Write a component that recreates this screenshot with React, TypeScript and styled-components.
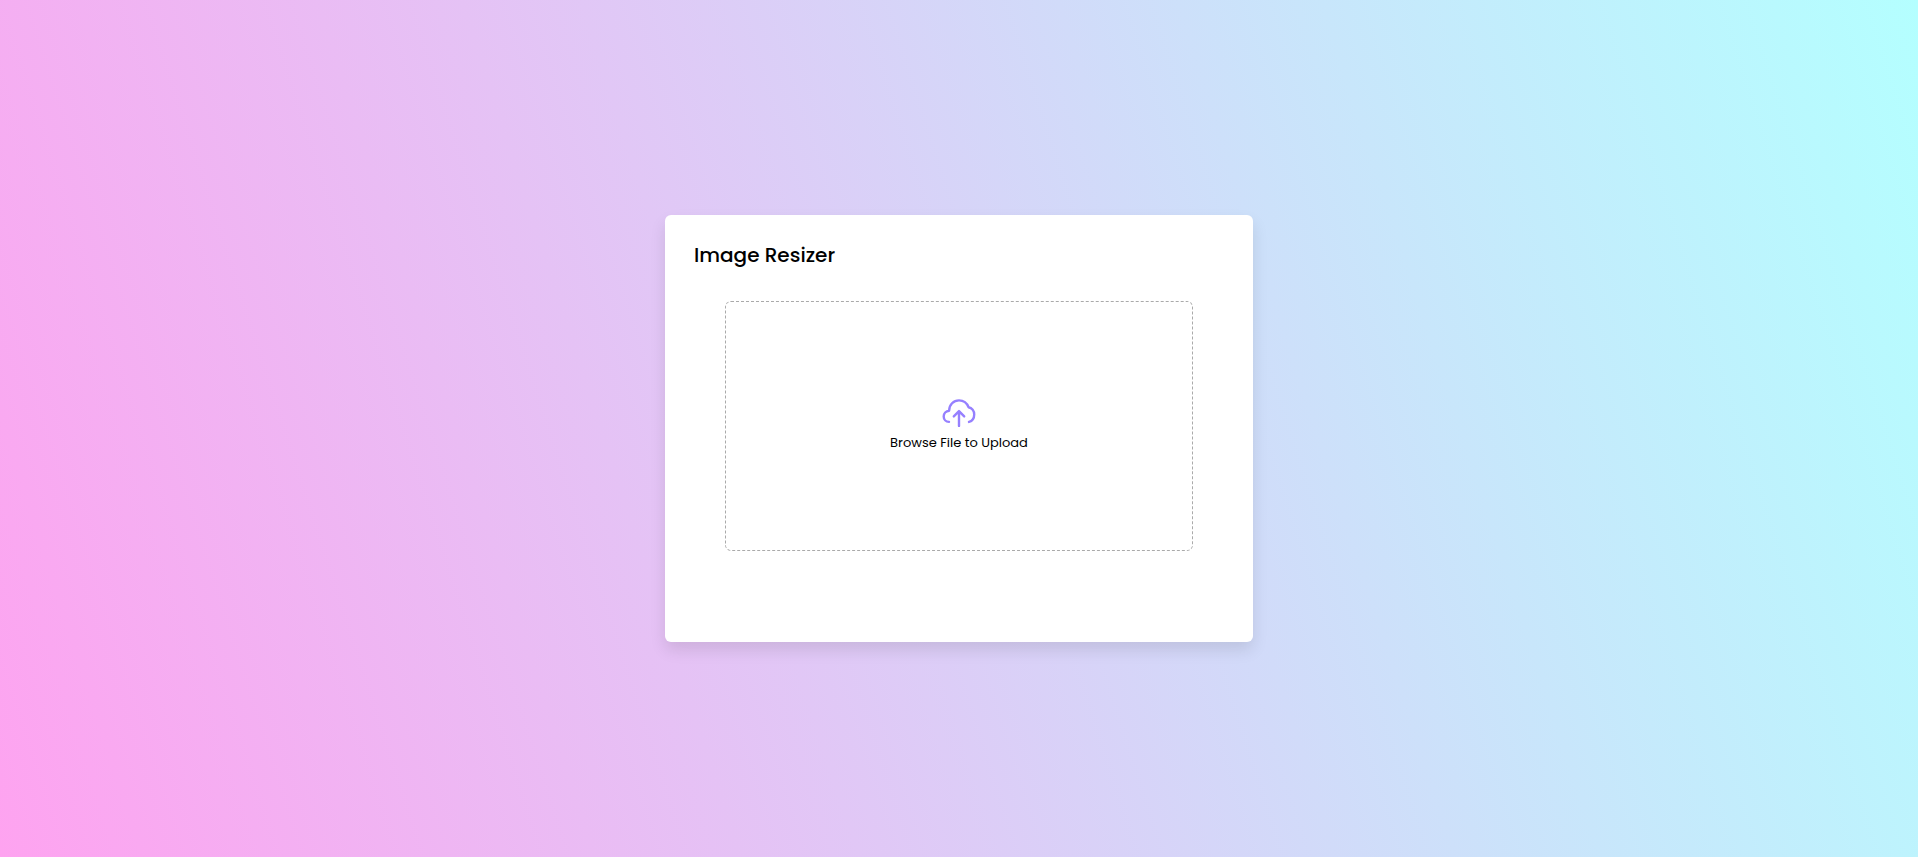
import { useState } from "react";
import styled, { createGlobalStyle } from "styled-components";

const GlobalStyle = createGlobalStyle`
  *, *::before, *::after { box-sizing: border-box; }
  body {
    margin: 0;
    font-family: Poppins, Inter, "Liberation Sans", sans-serif;
    color: #000;
  }
`;

const Page = styled.main`
  min-height: 100vh;
  display: flex;
  align-items: center;
  justify-content: center;
  background: linear-gradient(72deg, #fea3f0, #b4ffff);
`;

const Card = styled.section`
  width: 100%;
  max-width: 588px;
  padding: 25px 29px 91px;
  border-radius: 6px;
  background: #fff;
  box-shadow: 0 8px 16px rgba(0, 0, 0, 0.1);
`;

const Title = styled.h1`
  margin: 0 0 31px;
  font-size: 20px;
  line-height: 30px;
  font-weight: 500;
`;

const DropZone = styled.label`
  display: flex;
  flex-direction: column;
  align-items: center;
  justify-content: center;
  height: 250px;
  margin: 0 31px;
  border: 1px dashed #aaa;
  border-radius: 6px;
  cursor: pointer;

  &:focus-within {
    border-color: #927dfc;
  }
`;

const FileInput = styled.input`
  position: absolute;
  width: 1px;
  height: 1px;
  opacity: 0;
`;

const UploadIcon = styled.svg`
  width: 34px;
  height: 30px;
  fill: none;
  stroke: #9680ff;
  stroke-width: 2.4;
  stroke-linecap: round;
  stroke-linejoin: round;
`;

const Caption = styled.span`
  margin-top: 4px;
  font-size: 13px;
  line-height: 20px;
`;

export default function App() {
  const [fileName, setFileName] = useState("");

  return (
    <>
      <GlobalStyle />
      <Page>
        <Card>
          <Title>Image Resizer</Title>
          <DropZone>
            <FileInput
              type="file"
              accept="image/*"
              onChange={(event) => setFileName(event.target.files?.[0]?.name ?? "")}
            />
            <UploadIcon viewBox="0 0 34 30" aria-hidden="true">
              <path d="M7 22.9C3.8 22.8 1.7 20.4 1.7 17.4C1.7 14.4 4 12 7.1 11.7C7.2 5.6 11.6 1.4 17 1.4C21.4 1.4 25 4.1 26.5 8.2C30 8.9 32.2 12 32.2 15.4C32.2 19 30.2 21.9 27 22.9" />
              <path d="M17 26.9V12.1M11.8 17.4L17 12.1L22.2 17.4" />
            </UploadIcon>
            <Caption>{fileName || "Browse File to Upload"}</Caption>
          </DropZone>
        </Card>
      </Page>
    </>
  );
}
